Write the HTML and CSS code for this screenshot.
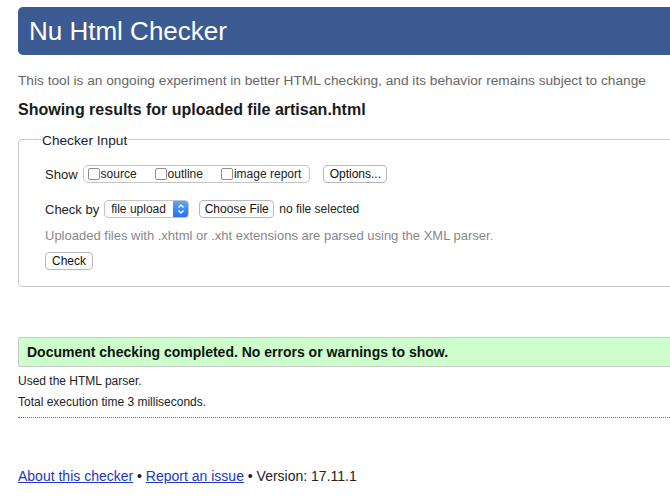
FILE: index.html
```html
<!DOCTYPE html>
<html>
<head>
<meta charset="utf-8">
<title>Nu Html Checker</title>
<link rel="stylesheet" href="styles.css">
</head>
<body>
<div class="page">
  <h1 class="header">Nu Html Checker</h1>
  <p class="intro">This tool is an ongoing experiment in better HTML checking, and its behavior remains subject to change</p>
  <h2 class="showing">Showing results for uploaded file artisan.html</h2>
  <fieldset class="checker">
    <legend class="legend">Checker Input</legend>
    <div class="row row-show">
      <span class="row-label">Show</span>
      <span class="group">
        <label class="opt"><span class="cb"></span>source</label>
        <label class="opt"><span class="cb"></span>outline</label>
        <label class="opt"><span class="cb"></span>image report</label>
      </span>
      <span class="btn btn-options">Options...</span>
    </div>
    <div class="row row-check">
      <span class="row-label">Check by</span>
      <span class="select"><span class="select-text">file upload</span><span class="stepper"><svg width="8" height="12" viewBox="0 0 8 12"><path d="M1.5 4.5 L4 2 L6.5 4.5 M1.5 7.5 L4 10 L6.5 7.5" fill="none" stroke="#fff" stroke-width="1.3"/></svg></span></span>
      <span class="btn btn-file">Choose File</span>
      <span class="nofile">no file selected</span>
    </div>
    <p class="note">Uploaded files with .xhtml or .xht extensions are parsed using the XML parser.</p>
    <span class="btn btn-check">Check</span>
  </fieldset>
  <p class="success">Document checking completed. No errors or warnings to show.</p>
  <div class="details">
    <p class="detail">Used the HTML parser.</p>
    <p class="detail">Total execution time 3 milliseconds.</p>
  </div>
  <p class="footer"><a href="#">About this checker</a> • <a href="#">Report an issue</a> • Version: 17.11.1</p>
</div>
</body>
</html>
```
FILE: styles.css
```css
html, body {
  margin: 0;
  padding: 0;
  overflow: hidden;
  background: #fff;
}
body {
  font-family: "Liberation Sans", Arial, sans-serif;
  color: #222;
}
.page {
  margin-left: 18px;
  margin-right: -30px;
}
.header {
  margin: 7px 0 0 0;
  height: 48px;
  line-height: 48px;
  padding-left: 11px;
  background: #3d5b93;
  color: #fff;
  font-size: 26px;
  font-weight: normal;
  border-radius: 5px 0 0 5px;
}
.intro {
  margin: 18px 0 0 0;
  font-size: 13.7px;
  line-height: 16px;
  color: #666;
}
.showing {
  margin: 12px 0 0 0;
  font-size: 16px;
  line-height: 18px;
  font-weight: bold;
  color: #1a1a1a;
}
.checker {
  margin: 10px 0 0 0;
  padding: 0 0 16px 26px;
  border: 1px solid #c8c8c8;
  border-radius: 4px;
  min-width: 0;
}
.legend {
  margin-left: -4px;
  padding: 4px 1px 0 1px;
  font-size: 13.7px;
  line-height: 16px;
  color: #222;
}
.row {
  display: flex;
  align-items: center;
  height: 18px;
  font-size: 13px;
}
.row-show {
  margin-top: 16px;
}
.row-check {
  margin-top: 17px;
}
.row-label {
  margin-right: 5px;
}
.group {
  display: flex;
  align-items: center;
  height: 16px;
  border: 1px solid #c4c4c4;
  border-radius: 5px;
  padding: 0 8px 0 4px;
  font-size: 12px;
  gap: 18px;
}
.opt {
  display: flex;
  align-items: center;
}
.cb {
  display: inline-block;
  width: 10px;
  height: 10px;
  border: 1px solid #8f8f8f;
  border-radius: 2px;
  margin-right: 1px;
  background: #fff;
}
.btn {
  display: inline-flex;
  align-items: center;
  justify-content: center;
  box-sizing: border-box;
  height: 18px;
  border: 1px solid #b8b8b8;
  border-radius: 4px;
  background: #fff;
  font-size: 12px;
  color: #111;
}
.btn-options {
  margin-left: 13px;
  width: 64px;
}
.select {
  display: inline-flex;
  align-items: center;
  box-sizing: border-box;
  height: 18px;
  width: 85px;
  border: 1px solid #c4c4c4;
  border-radius: 4px;
  font-size: 12px;
  overflow: hidden;
}
.select-text {
  flex: 1;
  padding-left: 6px;
}
.stepper {
  display: flex;
  align-items: center;
  justify-content: center;
  width: 15px;
  height: 18px;
  background: linear-gradient(#67a6fb, #1d6ef1);
}
.btn-file {
  margin-left: 10px;
  width: 75px;
}
.nofile {
  margin-left: 5px;
  font-size: 12px;
}
.note {
  margin: 10px 0 7px 0;
  font-size: 13px;
  line-height: 16px;
  color: #888;
}
.btn-check {
  width: 48px;
}
.success {
  margin: 50px 0 0 0;
  height: 28px;
  line-height: 28px;
  padding-left: 8px;
  background: #ccffcc;
  border: 1px solid #c8c8c8;
  border-right: none;
  border-radius: 3px 0 0 3px;
  font-size: 14px;
  font-weight: bold;
  color: #111;
}
.details {
  margin-top: 7px;
  padding-bottom: 8px;
  border-bottom: 1px dotted #777;
}
.detail {
  margin: 0 0 7px 0;
  font-size: 12px;
  line-height: 14px;
  color: #222;
}
.detail:last-child {
  margin-bottom: 0;
}
.footer {
  margin: 49px 0 0 0;
  font-size: 14px;
  line-height: 18px;
  color: #222;
}
.footer a {
  color: #2236c4;
  text-decoration: underline;
}
```
